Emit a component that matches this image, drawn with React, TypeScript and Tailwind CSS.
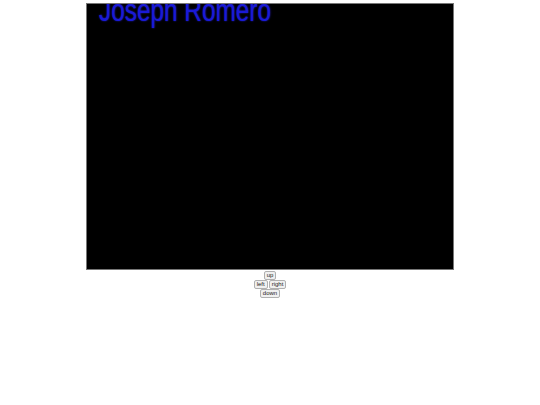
import React from "react";

export default function App() {
  const btn =
    "text-[6px] leading-[7px] px-[2px] py-0 border border-[#b0b0b0] rounded-[2px] bg-[#f0f0f0] text-[#222]";
  return (
    <div className="w-[540px] h-[405px] bg-white" style={{ fontFamily: '"Liberation Sans", Arial, sans-serif' }}>
      <div className="pt-[3px] flex justify-center">
        <div className="relative w-[368px] h-[267px] bg-black border border-[#777] overflow-hidden">
          <div
            className="absolute left-[12px] top-[-9px] text-[31px] leading-none text-[#1a1ad6] whitespace-nowrap origin-left scale-x-[0.786]"
            style={{ textShadow: "0 0 2px #1f1fd0" }}
          >
            Joseph Romero
          </div>
        </div>
      </div>
      <div className="flex flex-col items-center gap-0 mt-[1px]">
        <button className={btn}>up</button>
        <div className="flex gap-[1px]">
          <button className={btn}>left</button>
          <button className={btn}>right</button>
        </div>
        <button className={btn}>down</button>
      </div>
    </div>
  );
}
